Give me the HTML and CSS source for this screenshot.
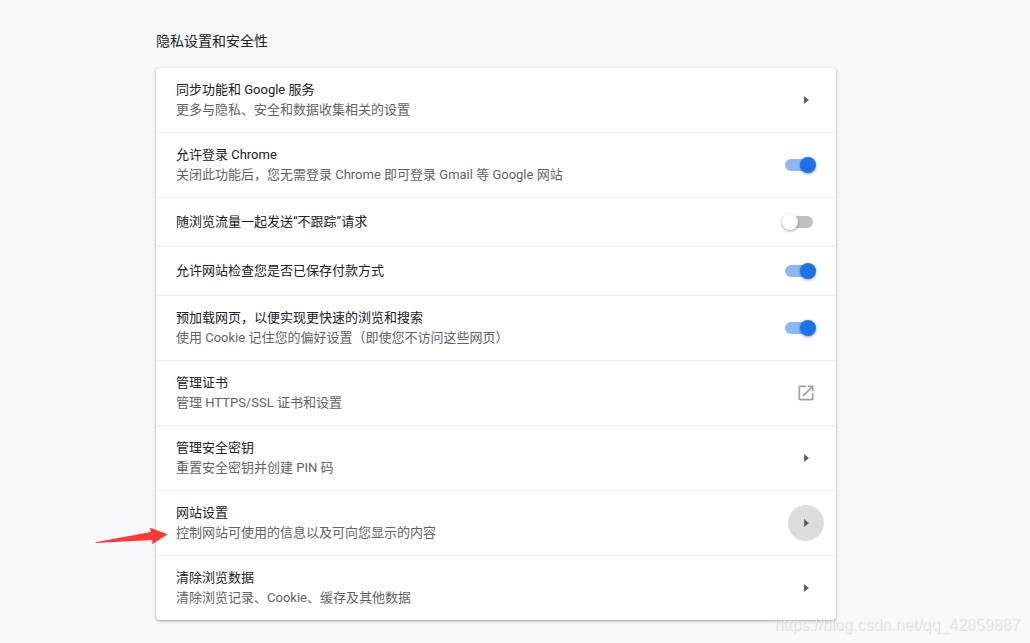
FILE: index.html
```html
<!DOCTYPE html>
<html lang="zh-CN">
<head>
<meta charset="utf-8">
<meta name="viewport" content="width=device-width, initial-scale=1">
<title>隐私设置和安全性</title>
<link rel="stylesheet" href="styles.css">
</head>
<body>
<main class="page">
  <section class="section">
    <h1 class="section-title">隐私设置和安全性</h1>
    <div class="card">
      <div class="row">
        <div class="text" id="sync"><div class="label">同步功能和 Google 服务</div><div class="sub">更多与隐私、安全和数据收集相关的设置</div></div>
        <button class="icon-button" type="button" aria-labelledby="sync"><svg class="arrow" viewBox="0 0 20 20" aria-hidden="true"><path d="M8 6l5 4-5 4z"/></svg></button>
      </div>
      <div class="row">
        <label class="text" for="signin"><span class="label">允许登录 Chrome</span><span class="sub">关闭此功能后，您无需登录 Chrome 即可登录 Gmail 等 Google 网站</span></label>
        <input class="toggle" type="checkbox" id="signin" checked>
      </div>
      <div class="row">
        <label class="text" for="dnt"><span class="label">随浏览流量一起发送“不跟踪”请求</span></label>
        <input class="toggle" type="checkbox" id="dnt">
      </div>
      <div class="row">
        <label class="text" for="payment"><span class="label">允许网站检查您是否已保存付款方式</span></label>
        <input class="toggle" type="checkbox" id="payment" checked>
      </div>
      <div class="row">
        <label class="text" for="preload"><span class="label">预加载网页，以便实现更快速的浏览和搜索</span><span class="sub">使用 Cookie 记住您的偏好设置（即使您不访问这些网页）</span></label>
        <input class="toggle" type="checkbox" id="preload" checked>
      </div>
      <div class="row">
        <div class="text" id="certs"><div class="label">管理证书</div><div class="sub">管理 HTTPS/SSL 证书和设置</div></div>
        <button class="icon-button" type="button" aria-labelledby="certs"><svg class="external" viewBox="0 0 24 24" aria-hidden="true"><path d="M19 19H5V5h7V3H5c-1.110 0-2 .9-2 2v14c0 1.100.890 2 2 2h14c1.100 0 2-.9 2-2v-7h-2v7zM14 3v2h3.590l-9.830 9.830 1.410 1.410L19 6.410V10h2V3h-7z"/></svg></button>
      </div>
      <div class="row">
        <div class="text" id="keys"><div class="label">管理安全密钥</div><div class="sub">重置安全密钥并创建 PIN 码</div></div>
        <button class="icon-button" type="button" aria-labelledby="keys"><svg class="arrow" viewBox="0 0 20 20" aria-hidden="true"><path d="M8 6l5 4-5 4z"/></svg></button>
      </div>
      <div class="row">
        <svg class="pointer" viewBox="0 0 74 20" aria-hidden="true"><path d="M0.300 15.300L55.700 5 55 0.700 72.700 7.300 57.300 17.300V13L0.600 16z"/></svg>
        <div class="text" id="site"><div class="label">网站设置</div><div class="sub">控制网站可使用的信息以及可向您显示的内容</div></div>
        <button class="icon-button active" type="button" aria-labelledby="site"><svg class="arrow" viewBox="0 0 20 20" aria-hidden="true"><path d="M8 6l5 4-5 4z"/></svg></button>
      </div>
      <div class="row">
        <div class="text" id="clear"><div class="label">清除浏览数据</div><div class="sub">清除浏览记录、Cookie、缓存及其他数据</div></div>
        <button class="icon-button" type="button" aria-labelledby="clear"><svg class="arrow" viewBox="0 0 20 20" aria-hidden="true"><path d="M8 6l5 4-5 4z"/></svg></button>
      </div>
    </div>
  </section>
</main>
<div class="watermark">https://blog.csdn.net/qq_42859887</div>
</body>
</html>
```
FILE: styles.css
```css
* {
  box-sizing: border-box;
}

body {
  margin: 0;
  background: #f8f9fa;
  color: #202124;
  font-family: Roboto, "Noto Sans CJK SC", sans-serif;
  font-size: 13px;
  line-height: 20px;
}

.page {
  padding: 31px 38px 22px 0;
}

.section {
  max-width: 680px;
  margin: 0 auto;
}

.section-title {
  margin: 0 0 17px;
  font-size: 14px;
  font-weight: 400;
  line-height: 20px;
}

.card {
  background: #fff;
  border-radius: 4px;
  box-shadow: 0 1px 2px rgba(60, 64, 67, 0.3), 0 1px 3px 1px rgba(60, 64, 67, 0.15);
}

.row {
  position: relative;
  display: flex;
  align-items: center;
  min-height: 48px;
  padding: 0 20px;
}

.row + .row {
  border-top: 1px solid #ededee;
  min-height: 49px;
}

.text {
  flex: 1;
  padding: 12px 0;
}

.label,
.sub {
  display: block;
}

.sub {
  color: #5f6368;
}

.icon-button {
  display: flex;
  align-items: center;
  justify-content: center;
  width: 36px;
  height: 36px;
  margin-right: -8px;
  padding: 0;
  border: 0;
  border-radius: 50%;
  background: transparent;
}

.icon-button.active {
  background: #dcdddf;
}

.arrow,
.external {
  width: 20px;
  height: 20px;
}

.arrow {
  fill: #5f6368;
}

.external {
  fill: #9aa0a6;
}

.toggle {
  appearance: none;
  position: relative;
  width: 34px;
  height: 16px;
  margin: 0;
}

.toggle::before,
.toggle::after {
  content: "";
  position: absolute;
}

.toggle::before {
  inset: 2px 3px;
  border-radius: 6px;
  background: #bdc1c6;
}

.toggle::after {
  top: 0;
  left: 0;
  width: 16px;
  height: 16px;
  border-radius: 50%;
  background: #fff;
  box-shadow: 0 1px 3px rgba(0, 0, 0, 0.4);
}

.toggle:checked::before {
  background: #8cb8f5;
}

.toggle:checked::after {
  right: 0;
  left: auto;
  background: #1a73e8;
}

.pointer {
  position: absolute;
  top: 36px;
  left: -61px;
  width: 74px;
  height: 20px;
  fill: #fd3a38;
}

.watermark {
  position: fixed;
  right: 10px;
  bottom: 8px;
  color: rgba(240, 241, 242, 0.8);
  font-family: "Liberation Sans", sans-serif;
  font-size: 16px;
  text-shadow: 1px 1px 1px rgba(0, 0, 0, 0.12);
}
```
